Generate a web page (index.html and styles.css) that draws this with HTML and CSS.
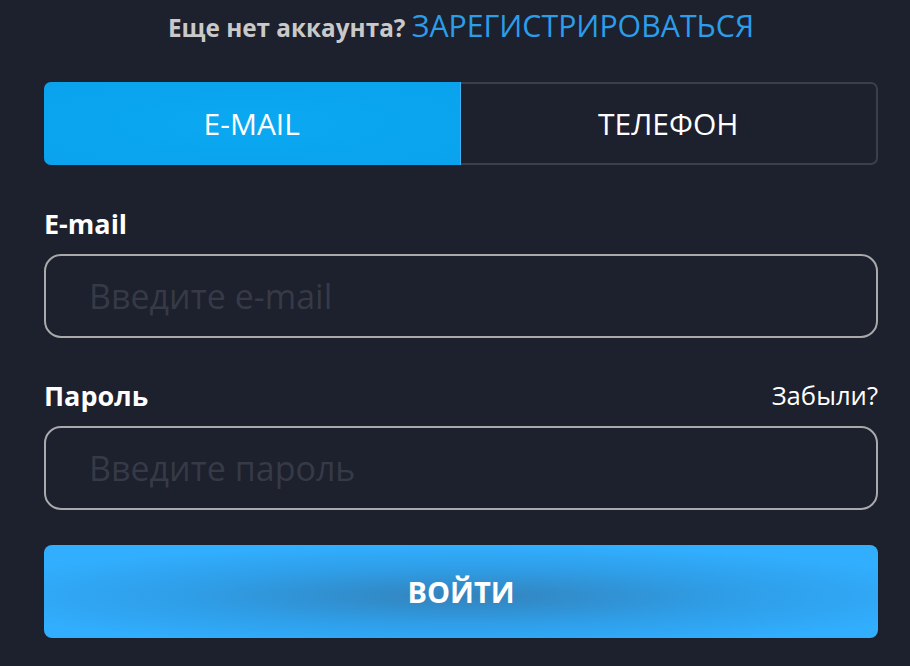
FILE: index.html
```html
<!DOCTYPE html>
<html lang="ru">
<head>
  <meta charset="UTF-8">
  <title>Вход</title>
  <meta name="viewport" content="width=device-width, initial-scale=1.0">
  <link rel="stylesheet" href="styles.css">
</head>
<body>
  <div class="login-box">
    <p class="signup-line">Еще нет аккаунта? <a href="#" class="signup-link">ЗАРЕГИСТРИРОВАТЬСЯ</a></p>

    <div class="tabs">
      <button type="button" class="tab tab-active">E-MAIL</button>
      <button type="button" class="tab">ТЕЛЕФОН</button>
    </div>

    <form action="#" method="post" class="login-form">
      <div class="field-head">
        <label for="email">E-mail</label>
      </div>
      <input type="email" id="email" name="email" placeholder="Введите e-mail">

      <div class="field-head field-head-gap">
        <label for="password">Пароль</label>
        <a href="#" class="forgot">Забыли?</a>
      </div>
      <input type="password" id="password" name="password" placeholder="Введите пароль">

      <button type="submit" class="submit-btn">ВОЙТИ</button>
    </form>
  </div>
</body>
</html>
```

FILE: styles.css
```css
:root {
  --bg: #1d202d;
  --blue: #0aa4ef;
  --link: #2b9de9;
  --muted: #c9c9c9;
  --placeholder: #363a46;
}
html, body {
  margin: 0;
  padding: 0;
  background: var(--bg);
  color: #fff;
  font-family: 'Open Sans', 'Noto Sans', Arial, sans-serif;
}
.login-box {
  width: 834px;
  margin: 0 0 0 44px;
  padding-top: 11px;
}
.signup-line {
  margin: 0;
  text-align: center;
  font-size: 24.3px;
  line-height: 32px;
  font-weight: 700;
  color: var(--muted);
}
.signup-link {
  font-size: 30.3px;
  line-height: 1;
  font-weight: 400;
  color: var(--link);
  text-decoration: none;
}

/* Tabs */
.tabs {
  display: flex;
  margin-top: 38px;
  height: 83px;
  border: 2px solid #3a3f4d;
  border-radius: 7px;
  box-sizing: border-box;
}
.tab {
  flex: 1;
  background: transparent;
  border: none;
  color: #fff;
  font-family: inherit;
  font-size: 30px;
  cursor: pointer;
  padding: 0;
}
.tab-active {
  margin: -2px 0 -2px -2px;
  border-radius: 7px 0 0 7px;
  border-right: 1px solid #3db3f2;
  background: radial-gradient(ellipse at center, #0ba8f2 0%, #0aa2ec 100%);
}

/* Form */
.login-form {
  display: flex;
  flex-direction: column;
}
.field-head {
  display: flex;
  justify-content: space-between;
  align-items: center;
  margin-top: 43px;
  height: 30px;
}
.field-head-gap {
  margin-top: 42px;
}
.field-head label {
  font-size: 27px;
  font-weight: 700;
}
.forgot {
  font-size: 25.7px;
  color: #fff;
  text-decoration: none;
}
input {
  margin-top: 16px;
  height: 84px;
  box-sizing: border-box;
  border: 2px solid #a9a9ab;
  border-radius: 17px;
  background: transparent;
  padding: 0 43px;
  font-family: inherit;
  font-size: 34px;
  color: #fff;
  outline: none;
}
input::placeholder {
  color: var(--placeholder);
}
.submit-btn {
  margin-top: 35px;
  height: 93px;
  border: none;
  border-radius: 8px;
  background: radial-gradient(ellipse 60% 55% at 50% 55%, #3383bb 0%, #2f9ee8 55%, #31aefe 100%);
  color: #fff;
  font-family: inherit;
  font-size: 29px;
  font-weight: 700;
  cursor: pointer;
}
```
